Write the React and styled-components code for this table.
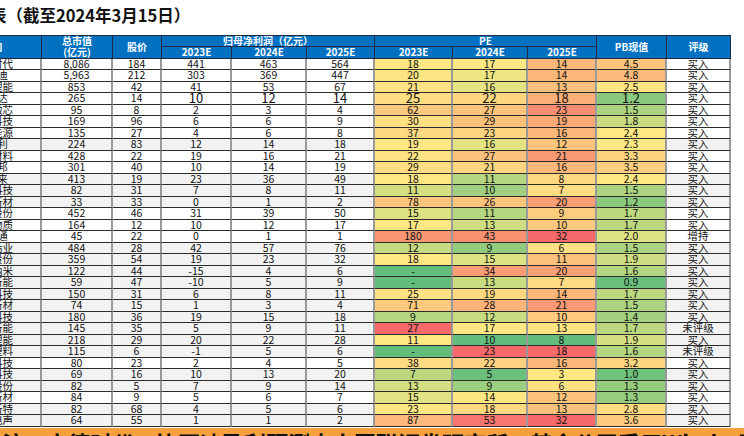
import React from 'react'
import styled, { createGlobalStyle } from 'styled-components'

const GlobalStyle = createGlobalStyle`
  *, *::before, *::after { box-sizing: border-box; }
  html, body { margin: 0; padding: 0; background: #fff; }
  body {
    font-family: "Noto Sans CJK SC", "Noto Sans", sans-serif;
    overflow: hidden;
  }
`

const Page = styled.div`
  width: 744px;
  height: 436px;
  overflow: hidden;
  display: flex;
  flex-direction: column;
  & > * { flex-shrink: 0; }
`

const Title = styled.h1`
  margin: 0 0 0 -43px;
  height: 35px;
  padding-top: 5px;
  font-size: 16.5px;
  line-height: 20px;
  font-weight: 700;
  color: #111;
  white-space: nowrap;
`

const Sheet = styled.div`
  margin-left: -56px;
  width: max-content;
  display: grid;
  grid-template-columns: 98px 71px 49px 70px 75px 68px 78px 75px 69px 70px 64px;
  grid-template-rows: repeat(2, 11.25px) repeat(32, 11.5px);
  border-top: 1px solid #1d2b45;
`

const Head = styled.div`
  grid-row: ${p => (p.$rows ? `span ${p.$rows}` : 'auto')};
  grid-column: ${p => (p.$cols ? `span ${p.$cols}` : 'auto')};
  display: flex;
  align-items: center;
  justify-content: center;
  text-align: center;
  background: #0070c0;
  color: #fff;
  font-size: 10px;
  font-weight: 700;
  line-height: 10.5px;
  white-space: nowrap;
  border-right: 1px solid #1d2b45;
  border-bottom: 1px solid #1d2b45;
`

const Cell = styled.div`
  display: flex;
  align-items: center;
  justify-content: center;
  background: ${p => p.$bg || '#fff'};
  color: #111;
  font-size: ${p => (p.$big ? '13px' : '10.5px')};
  line-height: 10px;
  white-space: nowrap;
  overflow: hidden;
  border-bottom: 1px solid #2b2b2b;
  border-right: 2px solid #9a9a9a;
`

const Note = styled.div`
  margin-top: 1px;
  height: 30px;
  background: #f5a03c;
  color: #111;
  font-size: 22px;
  font-weight: 700;
  line-height: 26px;
  padding: 1px 0 0 2px;
  white-space: nowrap;
`

// name, 总市值, 股价, 净利润23/24/25, PE23/24/25, PB, 评级, 灰底, PE/PB色
const rows = [
  ['宁德时代', '8,086', '184', '441', '463', '564', '18', '17', '14', '4.5', '买入', 0, ['#FFE884', '#FBE784', '#FCB87A', '#FDC47D']],
  ['比亚迪', '5,963', '212', '303', '369', '447', '20', '17', '14', '4.8', '买入', 0, ['#FFE483', '#EFE583', '#FCB87A', '#FCBA7B']],
  ['亿纬锂能', '853', '42', '41', '53', '67', '21', '16', '13', '2.5', '买入', 0, ['#FFE283', '#E6E383', '#FCBF7C', '#FFE683']],
  ['欣旺达', '265', '14', '10', '12', '14', '25', '22', '18', '1.2', '买入', 0, ['#FFDD82', '#FED680', '#FBB079', '#8BC97E'], true],
  ['华润微芯', '95', '8', '2', '3', '4', '62', '27', '23', '1.5', '买入', 0, ['#FDC97E', '#FCC47C', '#F98F72', '#ACD480']],
  ['当升科技', '169', '96', '6', '6', '9', '30', '29', '19', '1.8', '买入', 0, ['#FFE082', '#FCC27C', '#FBA977', '#C9DC81']],
  ['中伟能源', '135', '27', '4', '6', '8', '37', '23', '16', '2.4', '买入', 0, ['#FFDA81', '#FED580', '#FCB87A', '#FFE884']],
  ['科达利', '224', '83', '12', '14', '18', '19', '16', '12', '2.3', '买入', 1, ['#FFE784', '#E4E283', '#FCC47C', '#FAE984']],
  ['天赐材料', '428', '22', '19', '16', '21', '22', '27', '21', '3.3', '买入', 0, ['#FFE383', '#FCC17C', '#FA9A74', '#FED380']],
  ['新宙邦', '301', '40', '10', '14', '19', '29', '21', '16', '3.5', '买入', 0, ['#FFDD82', '#FED680', '#FCB87A', '#FDCE7F']],
  ['璞泰来', '413', '19', '23', '36', '49', '18', '11', '8', '2.4', '买入', 1, ['#FFE784', '#B4D680', '#FED880', '#FFE884']],
  ['星源科技', '82', '31', '7', '8', '11', '11', '10', '7', '1.5', '买入', 1, ['#D4DF82', '#A0D07F', '#FFDD82', '#ACD480']],
  ['嘉元新材', '33', '33', '0', '1', '2', '78', '26', '20', '1.2', '买入', 1, ['#FDC67D', '#FCC57C', '#FA9E75', '#8BC97E']],
  ['恩捷股份', '452', '46', '31', '39', '50', '15', '11', '9', '1.7', '买入', 0, ['#DCE182', '#B4D680', '#FECC7F', '#BBD881']],
  ['杉杉物质', '164', '12', '10', '12', '17', '17', '13', '10', '1.7', '买入', 0, ['#FFE884', '#D0DD82', '#FDC97E', '#BBD881']],
  ['科恒通', '45', '22', '0', '1', '1', '180', '43', '32', '2.0', '增持', 0, ['#F99673', '#F9906F', '#F8696B', '#DCE182']],
  ['华友钴业', '484', '28', '42', '57', '76', '12', '9', '6', '1.5', '买入', 1, ['#C6DB81', '#92CB7E', '#FFE082', '#ACD480']],
  ['厦钨股份', '359', '54', '19', '23', '32', '18', '15', '11', '1.9', '买入', 1, ['#FFE784', '#DDE283', '#FCC17C', '#CEDD82']],
  ['德方纳米', '122', '44', '-15', '4', '6', '-', '34', '20', '1.6', '买入', 1, ['#63BE7B', '#FA9C74', '#FAA175', '#B4D680']],
  ['孚能新能', '59', '47', '-10', '5', '9', '-', '13', '7', '0.9', '买入', 1, ['#63BE7B', '#C9DC81', '#FFDB81', '#69C07C']],
  ['信德科技', '150', '31', '6', '8', '11', '25', '19', '14', '1.7', '买入', 1, ['#FFE283', '#FED980', '#FCB87A', '#BBD881']],
  ['道氏新材', '74', '15', '1', '3', '4', '71', '28', '21', '1.5', '买入', 1, ['#FDC97E', '#FBB47A', '#FA9A74', '#ACD480']],
  ['壹石科技', '180', '36', '19', '15', '18', '9', '12', '10', '1.4', '买入', 1, ['#B4D680', '#C9DC81', '#FDCA7E', '#A3D17F']],
  ['海辰新能', '145', '35', '5', '9', '11', '27', '17', '13', '1.7', '未评级', 1, ['#F8696B', '#FFE784', '#FFE383', '#BBD881']],
  ['鹏辉锂能', '218', '29', '20', '22', '28', '11', '10', '8', '1.9', '买入', 1, ['#FFE784', '#63BE7B', '#63BE7B', '#D4DF82']],
  ['金发塑料', '115', '6', '-1', '5', '6', '-', '23', '18', '1.6', '未评级', 1, ['#63BE7B', '#F8696B', '#F8696B', '#B4D680']],
  ['雅化科技', '80', '23', '2', '4', '5', '38', '22', '16', '3.2', '买入', 0, ['#FFDB81', '#FDD17F', '#FCB87A', '#FED680']],
  ['永兴科技', '69', '16', '10', '13', '20', '7', '5', '3', '1.0', '买入', 1, ['#BDD881', '#6BC07C', '#FFE884', '#6FC27C']],
  ['中科股份', '82', '5', '7', '9', '14', '13', '9', '6', '1.3', '买入', 1, ['#D3DF82', '#9BCF7F', '#FFE082', '#95CC7E']],
  ['翔丰新材', '84', '9', '5', '6', '7', '15', '14', '12', '1.3', '买入', 0, ['#E2E283', '#FEE683', '#FCC47C', '#95CC7E']],
  ['大全新特', '82', '68', '4', '5', '6', '23', '18', '13', '2.8', '买入', 1, ['#FFE884', '#FED980', '#FCC17C', '#FEDC81']],
  ['国光电声', '64', '55', '1', '1', '2', '87', '53', '32', '3.6', '买入', 1, ['#FCB97B', '#F8766D', '#F8696B', '#FDCA7E']],
]

const App = () => {
  return (
    <Page>
      <GlobalStyle />
      <Title>估值表（截至2024年3月15日）</Title>
      <Sheet>
        <Head $rows={2}>公司</Head>
        <Head $rows={2}>总市值<br />(亿元)</Head>
        <Head $rows={2}>股价</Head>
        <Head $cols={3}>归母净利润（亿元）</Head>
        <Head $cols={3}>PE</Head>
        <Head $rows={2}>PB现值</Head>
        <Head $rows={2}>评级</Head>
        {['2023E', '2024E', '2025E', '2023E', '2024E', '2025E'].map((y, i) => (
          <Head key={i}>{y}</Head>
        ))}
        {rows.map((r, i) => {
          const base = r[11] ? '#f2f2f2' : '#fff'
          const big = !!r[13]
          return (
            <React.Fragment key={i}>
              <Cell $bg={base}>{r[0]}</Cell>
              <Cell $bg={base}>{r[1]}</Cell>
              <Cell $bg={base}>{r[2]}</Cell>
              <Cell $bg={base} $big={big}>{r[3]}</Cell>
              <Cell $bg={base} $big={big}>{r[4]}</Cell>
              <Cell $bg={base} $big={big}>{r[5]}</Cell>
              <Cell $bg={r[12][0]} $big={big}>{r[6]}</Cell>
              <Cell $bg={r[12][1]} $big={big}>{r[7]}</Cell>
              <Cell $bg={r[12][2]} $big={big}>{r[8]}</Cell>
              <Cell $bg={r[12][3]} $big={big}>{r[9]}</Cell>
              <Cell $bg={base}>{r[10]}</Cell>
            </React.Fragment>
          )
        })}
      </Sheet>
      <Note>注：宁德时代、比亚迪盈利预测来自国联证券研究所，其余公司采用Wind一致预期</Note>
    </Page>
  )
}

export default App
